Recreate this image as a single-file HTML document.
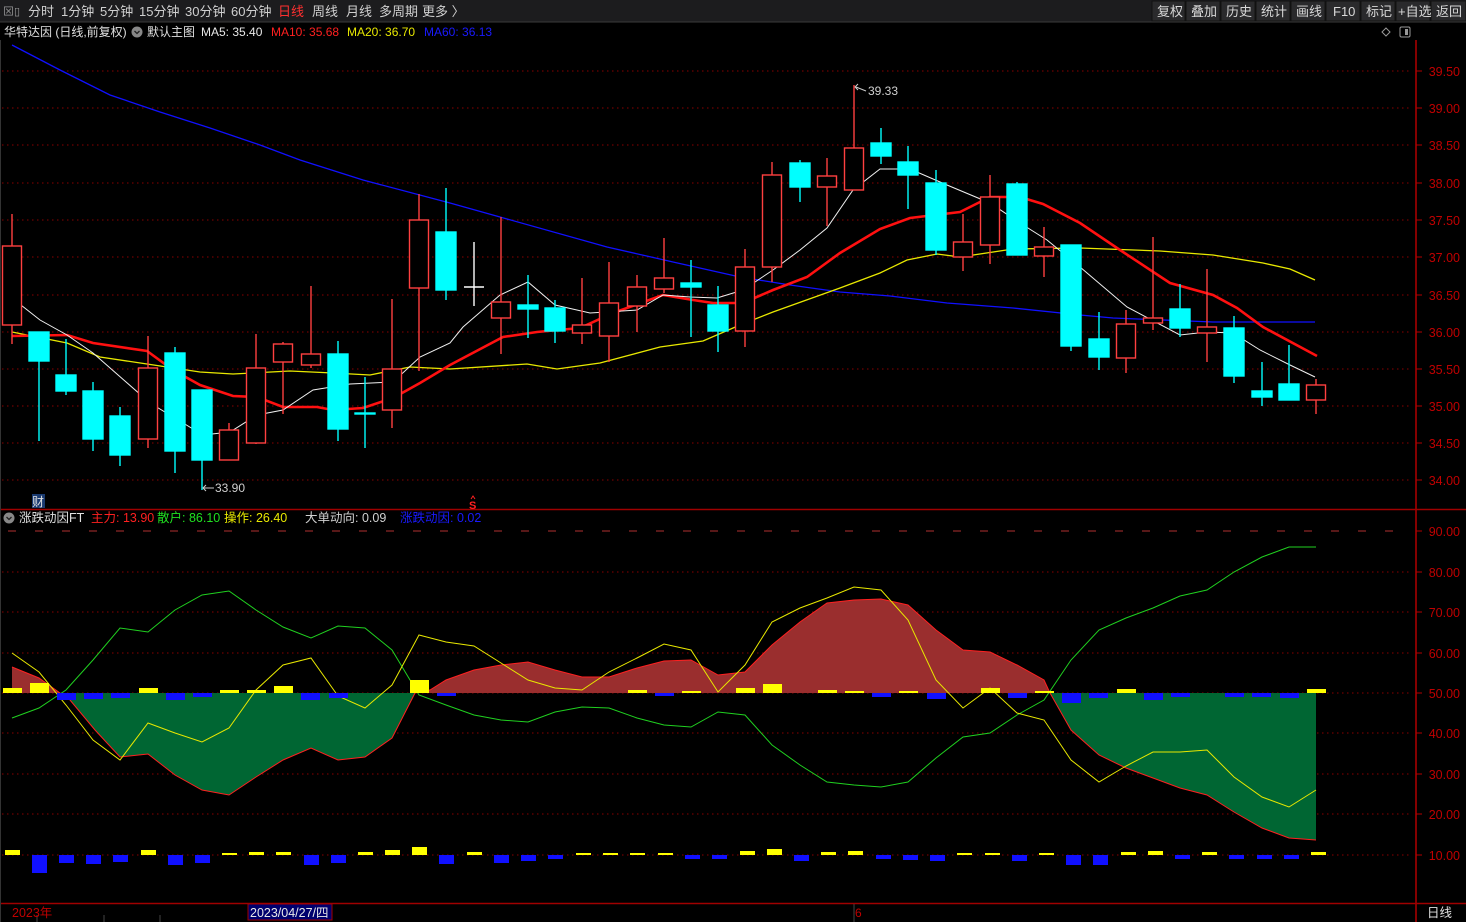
<!DOCTYPE html>
<html><head><meta charset="utf-8"><style>
html,body{margin:0;padding:0;background:#000;width:1466px;height:922px;overflow:hidden}
svg{display:block;font-family:"Liberation Sans","Noto Sans CJK SC",sans-serif}
</style></head><body>
<svg width="1466" height="922" viewBox="0 0 1466 922" xmlns="http://www.w3.org/2000/svg">
<rect width="1466" height="922" fill="#000"/>
<rect x="0" y="0" width="1466" height="22" fill="#1c1c1e"/>
<line x1="0" y1="22" x2="1466" y2="22" stroke="#3a3a3a"/>
<g font-size="13" fill="#d0d0d0">
<text x="3" y="15" font-size="11" fill="#999">⊠▯</text>
<text x="28" y="16">分时</text><text x="61" y="16">1分钟</text><text x="100" y="16">5分钟</text>
<text x="139" y="16">15分钟</text><text x="185" y="16">30分钟</text><text x="231" y="16">60分钟</text>
<text x="278" y="16" fill="#ff3030">日线</text><text x="312" y="16">周线</text><text x="346" y="16">月线</text>
<text x="379" y="16">多周期</text><text x="422" y="16">更多 〉</text>
</g>
<g fill="#2a2a2c" stroke="#111">
<rect x="1152" y="1" width="33" height="20"/><rect x="1186" y="1" width="34" height="20"/><rect x="1221" y="1" width="34" height="20"/>
<rect x="1256" y="1" width="34" height="20"/><rect x="1291" y="1" width="34" height="20"/><rect x="1326" y="1" width="34" height="20"/>
<rect x="1361" y="1" width="34" height="20"/><rect x="1396" y="1" width="34" height="20"/><rect x="1431" y="1" width="35" height="20"/>
</g>
<g font-size="13" fill="#d8d8d8">
<text x="1157" y="16">复权</text><text x="1191" y="16">叠加</text><text x="1226" y="16">历史</text><text x="1261" y="16">统计</text>
<text x="1296" y="16">画线</text><text x="1333" y="16">F10</text><text x="1366" y="16">标记</text><text x="1398" y="16">+自选</text><text x="1436" y="16">返回</text>
</g>
<g font-size="12">
<text x="4" y="36" fill="#e0e0e0">华特达因 (日线,前复权)</text>
<circle cx="137" cy="32" r="5.5" fill="#888"/><path d="M134.5 31 L137 33.5 L139.5 31" stroke="#222" stroke-width="1.3" fill="none"/>
<text x="147" y="36" fill="#e0e0e0">默认主图</text>
<text x="201" y="36" fill="#e8e8e8">MA5: 35.40</text>
<text x="271" y="36" fill="#ff2020">MA10: 35.68</text>
<text x="347" y="36" fill="#e8e800">MA20: 36.70</text>
<text x="424" y="36" fill="#1a1aff">MA60: 36.13</text>
</g>
<path d="M1386 28 L1390 32 L1386 36 L1382 32 Z" stroke="#999" fill="none"/>
<rect x="1400" y="27" width="10" height="10" rx="1.5" stroke="#999" fill="none"/><rect x="1405" y="29" width="3" height="6" fill="#999"/>
<g stroke="#8a0000" stroke-dasharray="1.5,3.5" stroke-width="1">
<line x1="2" y1="71" x2="1410" y2="71"/><line x1="2" y1="108" x2="1410" y2="108"/><line x1="2" y1="145" x2="1410" y2="145"/>
<line x1="2" y1="183" x2="1410" y2="183"/><line x1="2" y1="220" x2="1410" y2="220"/><line x1="2" y1="257" x2="1410" y2="257"/>
<line x1="2" y1="295" x2="1410" y2="295"/><line x1="2" y1="332" x2="1410" y2="332"/><line x1="2" y1="369" x2="1410" y2="369"/>
<line x1="2" y1="406" x2="1410" y2="406"/><line x1="2" y1="443" x2="1410" y2="443"/><line x1="2" y1="480" x2="1410" y2="480"/>
<line x1="2" y1="572" x2="1410" y2="572"/><line x1="2" y1="612" x2="1410" y2="612"/><line x1="2" y1="653" x2="1410" y2="653"/>
<line x1="2" y1="693" x2="1410" y2="693"/><line x1="2" y1="733" x2="1410" y2="733"/><line x1="2" y1="774" x2="1410" y2="774"/>
<line x1="2" y1="814" x2="1410" y2="814"/><line x1="2" y1="855" x2="1410" y2="855"/>
</g>
<line x1="8" y1="531" x2="1410" y2="531" stroke="#b03030" stroke-dasharray="8,19"/>
<line x1="1416" y1="40" x2="1416" y2="922" stroke="#b00000" stroke-width="1.5"/>
<line x1="0" y1="509.5" x2="1466" y2="509.5" stroke="#a00000" stroke-width="1.5"/>
<line x1="0" y1="903.5" x2="1466" y2="903.5" stroke="#a00000" stroke-width="1.5"/>
<line x1="0.5" y1="40" x2="0.5" y2="922" stroke="#333"/>
<g font-size="12.5" fill="#c00000" text-anchor="end">
<g stroke="#b00000"><line x1="1416" y1="71" x2="1422" y2="71"/><line x1="1416" y1="108" x2="1422" y2="108"/><line x1="1416" y1="145" x2="1422" y2="145"/><line x1="1416" y1="183" x2="1422" y2="183"/><line x1="1416" y1="220" x2="1422" y2="220"/><line x1="1416" y1="257" x2="1422" y2="257"/><line x1="1416" y1="295" x2="1422" y2="295"/><line x1="1416" y1="332" x2="1422" y2="332"/><line x1="1416" y1="369" x2="1422" y2="369"/><line x1="1416" y1="406" x2="1422" y2="406"/><line x1="1416" y1="443" x2="1422" y2="443"/><line x1="1416" y1="480" x2="1422" y2="480"/>
<line x1="1416" y1="531" x2="1422" y2="531"/><line x1="1416" y1="572" x2="1422" y2="572"/><line x1="1416" y1="612" x2="1422" y2="612"/><line x1="1416" y1="653" x2="1422" y2="653"/><line x1="1416" y1="693" x2="1422" y2="693"/><line x1="1416" y1="733" x2="1422" y2="733"/><line x1="1416" y1="774" x2="1422" y2="774"/><line x1="1416" y1="814" x2="1422" y2="814"/><line x1="1416" y1="855" x2="1422" y2="855"/></g>
<text x="1460" y="76">39.50</text><text x="1460" y="113">39.00</text><text x="1460" y="150">38.50</text><text x="1460" y="188">38.00</text><text x="1460" y="225">37.50</text><text x="1460" y="262">37.00</text><text x="1460" y="300">36.50</text><text x="1460" y="337">36.00</text><text x="1460" y="374">35.50</text><text x="1460" y="411">35.00</text><text x="1460" y="448">34.50</text><text x="1460" y="485">34.00</text>
<text x="1460" y="536">90.00</text><text x="1460" y="577">80.00</text><text x="1460" y="617">70.00</text><text x="1460" y="658">60.00</text><text x="1460" y="698">50.00</text><text x="1460" y="738">40.00</text><text x="1460" y="779">30.00</text><text x="1460" y="819">20.00</text><text x="1460" y="860">10.00</text>
</g>
<polyline fill="none" stroke="#1010ff" stroke-width="1.3" points="12,45 60,70 110,95 160,112 210,128 260,145 300,160 363,180 450,203 500,217 607,247 673,262 740,277 790,285 840,292 890,296 947,303 1013,308 1080,315 1113,318 1213,322 1315,322"/>
<polyline fill="none" stroke="#e8e800" stroke-width="1.3" points="12,332 67,343 100,357 147,364 200,372 233,374 290,371 333,373 370,375 410,367 450,369 527,364 557,369 600,363 660,347 703,341 740,325 773,312 840,288 880,273 907,260 937,254 960,257 1013,249 1080,248 1160,251 1213,255 1263,263 1290,269 1315,280"/>
<polyline fill="none" stroke="#ff1010" stroke-width="2.6" points="12,336 67,335 93,343 147,351 173,370 200,385 233,396 257,397 283,407 317,407 333,410 363,408 393,398 420,383 450,365 503,337 537,332 580,328 613,313 663,295 693,300 713,303 743,303 773,290 807,277 840,253 880,229 910,218 960,212 990,197 1020,197 1043,204 1080,223 1120,250 1170,283 1213,295 1237,308 1263,327 1317,356"/>
<polyline fill="none" stroke="#f0f0f0" stroke-width="1" points="12,298 40,320 67,335 93,353 150,403 203,435 230,432 257,415 283,410 313,390 350,384 393,382 420,357 450,343 463,327 500,295 528,282 555,305 590,313 637,310 663,295 690,297 717,298 743,290 773,270 800,250 827,228 853,190 880,169 910,169 947,185 990,203 1020,223 1047,240 1080,267 1127,307 1180,335 1207,332 1233,333 1260,350 1290,365 1315,377"/>
<g stroke-width="1.4">
<g stroke="#ff4040" fill="#000">
<line x1="12" y1="214" x2="12" y2="344"/><rect x="2.5" y="246" width="19" height="79"/>
<line x1="148" y1="336" x2="148" y2="448"/><rect x="138.5" y="368" width="19" height="71"/>
<line x1="229" y1="423" x2="229" y2="460"/><rect x="219.5" y="430" width="19" height="30"/>
<line x1="256" y1="334" x2="256" y2="444"/><rect x="246.5" y="368" width="19" height="75"/>
<line x1="283" y1="342" x2="283" y2="414"/><rect x="273.5" y="344" width="19" height="18"/>
<line x1="311" y1="286" x2="311" y2="368"/><rect x="301.5" y="354" width="19" height="11"/>
<line x1="392" y1="299" x2="392" y2="428"/><rect x="382.5" y="369" width="19" height="41"/>
<line x1="419" y1="194" x2="419" y2="371"/><rect x="409.5" y="220" width="19" height="68"/>
<line x1="501" y1="217" x2="501" y2="354"/><rect x="491.5" y="302" width="19" height="16"/>
<line x1="582" y1="278" x2="582" y2="344"/><rect x="572.5" y="325" width="19" height="8"/>
<line x1="609" y1="262" x2="609" y2="362"/><rect x="599.5" y="303" width="19" height="33"/>
<line x1="637" y1="275" x2="637" y2="332"/><rect x="627.5" y="287" width="19" height="19"/>
<line x1="664" y1="238" x2="664" y2="293"/><rect x="654.5" y="278" width="19" height="11"/>
<line x1="745" y1="249" x2="745" y2="347"/><rect x="735.5" y="267" width="19" height="64"/>
<line x1="772" y1="162" x2="772" y2="282"/><rect x="762.5" y="175" width="19" height="92"/>
<line x1="827" y1="158" x2="827" y2="226"/><rect x="817.5" y="176" width="19" height="11"/>
<line x1="854" y1="85" x2="854" y2="190"/><rect x="844.5" y="148" width="19" height="42"/>
<line x1="963" y1="214" x2="963" y2="271"/><rect x="953.5" y="242" width="19" height="15"/>
<line x1="990" y1="175" x2="990" y2="264"/><rect x="980.5" y="197" width="19" height="48"/>
<line x1="1044" y1="227" x2="1044" y2="277"/><rect x="1034.5" y="247" width="19" height="9"/>
<line x1="1126" y1="310" x2="1126" y2="373"/><rect x="1116.5" y="324" width="19" height="34"/>
<line x1="1153" y1="237" x2="1153" y2="330"/><rect x="1143.5" y="318" width="19" height="5"/>
<line x1="1207" y1="269" x2="1207" y2="362"/><rect x="1197.5" y="327" width="19" height="6"/>
<line x1="1316" y1="379" x2="1316" y2="414"/><rect x="1306.5" y="385" width="19" height="15"/>
</g>
<g stroke="#00ffff" fill="#00ffff">
<line x1="39" y1="332" x2="39" y2="441"/><rect x="29" y="332" width="20" height="29"/>
<line x1="66" y1="339" x2="66" y2="395"/><rect x="56" y="375" width="20" height="16"/>
<line x1="93" y1="382" x2="93" y2="451"/><rect x="83" y="391" width="20" height="48"/>
<line x1="120" y1="407" x2="120" y2="466"/><rect x="110" y="416" width="20" height="39"/>
<line x1="175" y1="347" x2="175" y2="473"/><rect x="165" y="353" width="20" height="98"/>
<line x1="202" y1="390" x2="202" y2="490"/><rect x="192" y="390" width="20" height="70"/>
<line x1="338" y1="341" x2="338" y2="441"/><rect x="328" y="354" width="20" height="75"/>
<line x1="365" y1="377" x2="365" y2="448"/><rect x="355" y="413" width="20" height="1"/>
<line x1="446" y1="188" x2="446" y2="300"/><rect x="436" y="232" width="20" height="58"/>
<line x1="528" y1="275" x2="528" y2="338"/><rect x="518" y="305" width="20" height="4"/>
<line x1="555" y1="300" x2="555" y2="343"/><rect x="545" y="308" width="20" height="23"/>
<line x1="691" y1="260" x2="691" y2="337"/><rect x="681" y="283" width="20" height="4"/>
<line x1="718" y1="286" x2="718" y2="352"/><rect x="708" y="305" width="20" height="26"/>
<line x1="800" y1="160" x2="800" y2="202"/><rect x="790" y="163" width="20" height="24"/>
<line x1="881" y1="128" x2="881" y2="164"/><rect x="871" y="143" width="20" height="13"/>
<line x1="908" y1="146" x2="908" y2="209"/><rect x="898" y="162" width="20" height="13"/>
<line x1="936" y1="170" x2="936" y2="255"/><rect x="926" y="183" width="20" height="67"/>
<line x1="1017" y1="182" x2="1017" y2="255"/><rect x="1007" y="184" width="20" height="71"/>
<line x1="1071" y1="245" x2="1071" y2="351"/><rect x="1061" y="245" width="20" height="101"/>
<line x1="1099" y1="312" x2="1099" y2="370"/><rect x="1089" y="339" width="20" height="18"/>
<line x1="1180" y1="284" x2="1180" y2="337"/><rect x="1170" y="309" width="20" height="19"/>
<line x1="1234" y1="316" x2="1234" y2="383"/><rect x="1224" y="328" width="20" height="48"/>
<line x1="1262" y1="362" x2="1262" y2="406"/><rect x="1252" y="391" width="20" height="6"/>
<line x1="1289" y1="345" x2="1289" y2="400"/><rect x="1279" y="384" width="20" height="16"/>
</g>
<g stroke="#fff"><line x1="474" y1="242" x2="474" y2="306"/><line x1="464" y1="287" x2="484" y2="287"/></g>
</g>
<g font-size="12" fill="#d0d0d0">
<path d="M856 87 L866 91" stroke="#ccc"/><path d="M858 84 L855 87 L858 90" stroke="#ccc" fill="none"/>
<text x="868" y="95">39.33</text>
<path d="M203 488 L214 488" stroke="#ccc"/><path d="M206 485 L203 488 L206 491" stroke="#ccc" fill="none"/>
<text x="215" y="492">33.90</text>
</g>
<rect x="32" y="494" width="13" height="14" fill="#1a3a70"/><text x="32" y="506" font-size="12" fill="#e0e0e0">财</text>
<text x="469" y="509" font-size="11" fill="#ff2020" font-weight="bold">S</text><path d="M471 499 L473 496 L475 499" stroke="#ff2020" fill="none"/>
<circle cx="9" cy="518" r="5.5" fill="#888"/><path d="M6.5 517 L9 519.5 L11.5 517" stroke="#222" stroke-width="1.3" fill="none"/>
<g font-size="12.5">
<text x="19" y="522" fill="#e0e0e0">涨跌动因FT</text>
<text x="91" y="522" fill="#ff2020">主力: 13.90</text>
<text x="157" y="522" fill="#20e020">散户: 86.10</text>
<text x="224" y="522" fill="#e8e800">操作: 26.40</text>
<text x="305" y="522" fill="#d0d0d0">大单动向: 0.09</text>
<text x="400" y="522" fill="#1a1aff">涨跌动因: 0.02</text>
</g>
<polygon fill="#9a2e2e" points="12,667 39,678 60,693 12,693"/>
<polygon fill="#9a2e2e" points="415,693 430,690 446,680 474,670 501,665 528,662 555,670 582,677 609,677 637,668 664,661 691,660 718,675 745,672 772,645 800,622 827,603 854,600 881,599 908,605 936,630 963,650 990,652 1017,665 1044,680 1050,693"/>
<polygon fill="#006633" points="60,693 70,700 95,730 120,757 148,754 175,775 202,790 229,795 256,777 283,760 311,748 338,760 365,757 392,738 415,693"/>
<polygon fill="#006633" points="1050,693 1071,730 1099,755 1126,768 1153,778 1180,788 1207,795 1234,812 1262,828 1289,838 1316,840 1316,693"/>
<polyline fill="none" stroke="#ff2020" stroke-width="1" points="12,667 39,678 60,693 70,700 95,730 120,757 148,754 175,775 202,790 229,795 256,777 283,760 311,748 338,760 365,757 392,738 415,693 430,690 446,680 474,670 501,665 528,662 555,670 582,677 609,677 637,668 664,661 691,660 718,675 745,672 772,645 800,622 827,603 854,600 881,599 908,605 936,630 963,650 990,652 1017,665 1044,680 1050,693 1071,730 1099,755 1126,768 1153,778 1180,788 1207,795 1234,812 1262,828 1289,838 1316,840"/>
<polyline fill="none" stroke="#20d020" stroke-width="1" points="12,718 39,708 66,690 93,660 120,628 148,632 175,610 202,595 229,591 256,610 283,627 311,638 338,626 365,628 392,650 419,695 446,705 474,715 501,720 528,722 555,712 582,707 609,708 637,718 664,725 691,727 718,712 745,715 772,745 800,765 827,782 854,785 881,787 908,782 936,758 963,737 990,733 1017,715 1044,700 1071,660 1099,630 1126,618 1153,608 1180,596 1207,590 1234,572 1262,557 1289,547 1316,547"/>
<polyline fill="none" stroke="#e8e800" stroke-width="1" points="12,653 39,672 66,705 93,740 120,760 148,723 175,733 202,742 229,728 256,690 283,665 311,658 338,696 365,708 392,685 419,635 446,642 474,646 501,663 528,680 555,688 582,690 609,672 637,658 664,644 691,650 718,692 745,665 772,622 800,608 827,598 854,587 881,590 908,620 936,680 963,708 990,688 1017,713 1044,720 1071,760 1099,782 1126,766 1153,752 1180,752 1207,750 1234,777 1262,797 1289,807 1316,790"/>
<g fill="#ffff00">
<rect x="3" y="688" width="19" height="5"/><rect x="30" y="683" width="19" height="10"/><rect x="139" y="688" width="19" height="5"/>
<rect x="220" y="690" width="19" height="3"/><rect x="247" y="690" width="19" height="3"/><rect x="274" y="686" width="19" height="7"/>
<rect x="410" y="680" width="19" height="13"/><rect x="628" y="690" width="19" height="3"/><rect x="682" y="691" width="19" height="2"/>
<rect x="736" y="688" width="19" height="5"/><rect x="763" y="684" width="19" height="9"/><rect x="818" y="690" width="19" height="3"/>
<rect x="845" y="691" width="19" height="2"/><rect x="899" y="691" width="19" height="2"/><rect x="981" y="688" width="19" height="5"/>
<rect x="1035" y="691" width="19" height="2"/><rect x="1117" y="689" width="19" height="4"/><rect x="1307" y="689" width="19" height="4"/>
</g>
<g fill="#1010ff">
<rect x="57" y="693" width="19" height="7"/><rect x="84" y="693" width="19" height="6"/><rect x="111" y="693" width="19" height="5"/>
<rect x="166" y="693" width="19" height="7"/><rect x="193" y="693" width="19" height="4"/><rect x="301" y="693" width="19" height="7"/>
<rect x="329" y="693" width="19" height="5"/><rect x="437" y="693" width="19" height="3"/><rect x="655" y="693" width="19" height="3"/>
<rect x="872" y="693" width="19" height="4"/><rect x="927" y="693" width="19" height="6"/><rect x="1008" y="693" width="19" height="5"/>
<rect x="1062" y="693" width="19" height="10"/><rect x="1089" y="693" width="19" height="5"/><rect x="1144" y="693" width="19" height="7"/>
<rect x="1171" y="693" width="19" height="4"/><rect x="1225" y="693" width="19" height="4"/><rect x="1252" y="693" width="19" height="4"/><rect x="1280" y="693" width="19" height="5"/>
</g>
<g fill="#ffff00">
<rect x="5" y="850" width="15" height="5"/><rect x="141" y="850" width="15" height="5"/><rect x="222" y="853" width="15" height="2"/>
<rect x="249" y="852" width="15" height="3"/><rect x="276" y="852" width="15" height="3"/><rect x="358" y="852" width="15" height="3"/>
<rect x="385" y="850" width="15" height="5"/><rect x="412" y="847" width="15" height="8"/><rect x="467" y="852" width="15" height="3"/>
<rect x="576" y="853" width="15" height="2"/><rect x="603" y="853" width="15" height="2"/><rect x="630" y="853" width="15" height="2"/><rect x="658" y="853" width="15" height="2"/>
<rect x="740" y="851" width="15" height="4"/><rect x="767" y="849" width="15" height="6"/><rect x="821" y="852" width="15" height="3"/><rect x="848" y="851" width="15" height="4"/>
<rect x="957" y="853" width="15" height="2"/><rect x="985" y="853" width="15" height="2"/><rect x="1039" y="853" width="15" height="2"/>
<rect x="1121" y="852" width="15" height="3"/><rect x="1148" y="851" width="15" height="4"/><rect x="1202" y="852" width="15" height="3"/><rect x="1311" y="852" width="15" height="3"/>
</g>
<g fill="#1010ff">
<rect x="32" y="855" width="15" height="18"/><rect x="59" y="855" width="15" height="8"/><rect x="86" y="855" width="15" height="9"/>
<rect x="113" y="855" width="15" height="7"/><rect x="168" y="855" width="15" height="10"/><rect x="195" y="855" width="15" height="8"/>
<rect x="304" y="855" width="15" height="10"/><rect x="331" y="855" width="15" height="8"/><rect x="439" y="855" width="15" height="9"/>
<rect x="494" y="855" width="15" height="8"/><rect x="521" y="855" width="15" height="6"/><rect x="548" y="855" width="15" height="4"/>
<rect x="685" y="855" width="15" height="4"/><rect x="712" y="855" width="15" height="4"/><rect x="794" y="855" width="15" height="6"/>
<rect x="876" y="855" width="15" height="4"/><rect x="903" y="855" width="15" height="5"/><rect x="930" y="855" width="15" height="6"/>
<rect x="1012" y="855" width="15" height="6"/><rect x="1066" y="855" width="15" height="10"/><rect x="1093" y="855" width="15" height="10"/>
<rect x="1175" y="855" width="15" height="4"/><rect x="1229" y="855" width="15" height="4"/><rect x="1257" y="855" width="15" height="4"/><rect x="1284" y="855" width="15" height="4"/>
</g>
<g stroke="#444"><line x1="37" y1="915" x2="37" y2="922"/><line x1="104" y1="915" x2="104" y2="922"/><line x1="160" y1="915" x2="160" y2="922"/><line x1="854" y1="904" x2="854" y2="922"/></g>
<text x="12" y="917" font-size="12.5" fill="#c00000">2023年</text>
<rect x="248" y="904" width="84" height="16" fill="#00006e" stroke="#a00000"/>
<text x="250" y="917" font-size="12.5" fill="#e8e8e8">2023/04/27/四</text>
<text x="855" y="917" font-size="12" fill="#c00000">6</text>
<text x="1427" y="917" font-size="12.5" fill="#e0e0e0">日线</text>
</svg>
</body></html>
